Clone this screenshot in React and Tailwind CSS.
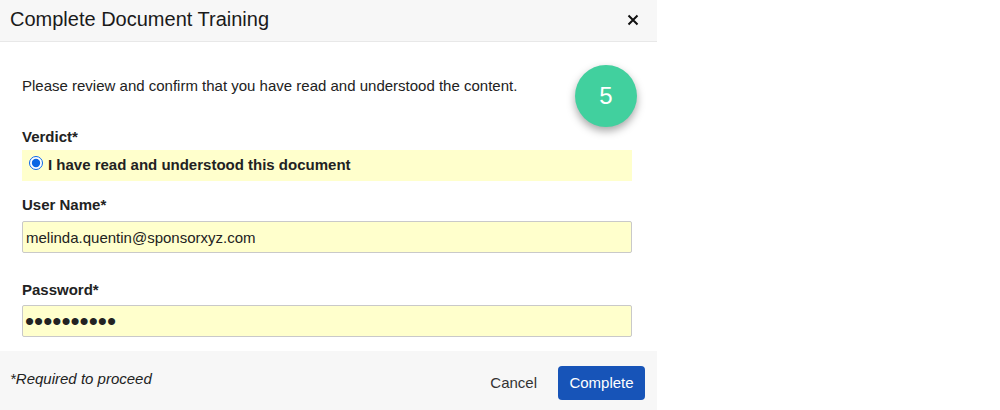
import { useState } from "react";

export default function App() {
  const [checked, setChecked] = useState(true);

  return (
    <div className="w-[1000px] h-[410px] bg-white font-['Liberation_Sans',Arial,sans-serif] text-[#222]">
      <div className="w-[657px] h-[410px] flex flex-col bg-white">
        <div className="h-[42px] flex items-center justify-between pl-[10px] pr-[18px] pb-[4px] bg-[#f7f7f7] border-b border-[#e8e8e8]">
          <h2 className="text-[20px] leading-none text-[#1a1a1a]">Complete Document Training</h2>
          <button className="text-[#111] mt-[2px]" aria-label="Close">
            <svg width="12" height="12" viewBox="0 0 12 12" aria-hidden="true">
              <path d="M1.5 1.5l9 9M10.5 1.5l-9 9" stroke="currentColor" strokeWidth="2" />
            </svg>
          </button>
        </div>

        <div className="relative flex-1 flex flex-col pl-[22px] pr-[25px] pt-[35px]">
          <div className="absolute left-[575px] top-[23px] w-[62px] h-[62px] rounded-full bg-[#41d09e] shadow-[0_4px_8px_rgba(0,0,0,0.35)] flex items-center justify-center text-white text-[24px]">
            5
          </div>
          <p className="text-[15px] leading-[18px] text-[#222]">
            Please review and confirm that you have read and understood the content.
          </p>

          <div className="mt-[33px] text-[15px] leading-[18px] font-bold text-[#222]">Verdict*</div>
          <label className="mt-[4px] h-[31px] flex items-center bg-[#ffffcc] pl-[7px] cursor-pointer">
            <input
              type="radio"
              checked={checked}
              onChange={() => setChecked(true)}
              className="w-[14px] h-[14px] m-0 mr-[5px] -mt-[6px] accent-[#0a66e4]"
            />
            <span className="text-[15px] font-bold text-[#222]">I have read and understood this document</span>
          </label>

          <div className="mt-[15px] text-[15px] leading-[18px] font-bold text-[#222]">User Name*</div>
          <input
            type="text"
            defaultValue="melinda.quentin@sponsorxyz.com"
            className="mt-[7px] h-[32px] w-full px-[3px] bg-[#ffffcc] border border-[#c9c9c9] rounded-[2px] text-[15px] text-[#222] outline-none"
          />

          <div className="mt-[28px] text-[15px] leading-[18px] font-bold text-[#222]">Password*</div>
          <input
            type="password"
            defaultValue="abcdefghij"
            className="mt-[6px] h-[32px] w-full px-[2px] bg-[#ffffcc] border border-[#c9c9c9] rounded-[2px] text-[26px] leading-none text-[#222] outline-none"
          />
        </div>

        <div className="h-[59px] flex items-center justify-between pl-[10px] pr-[12px] bg-[#f7f7f7]">
          <span className="italic text-[15px] -mt-[2px] text-[#222]">*Required to proceed</span>
          <div className="flex items-center gap-[21px] mt-[5px]">
            <button className="text-[15px] text-[#333]">Cancel</button>
            <button className="w-[87px] h-[34px] rounded-[4px] bg-[#1754b8] text-white text-[15px]">Complete</button>
          </div>
        </div>
      </div>
    </div>
  );
}
